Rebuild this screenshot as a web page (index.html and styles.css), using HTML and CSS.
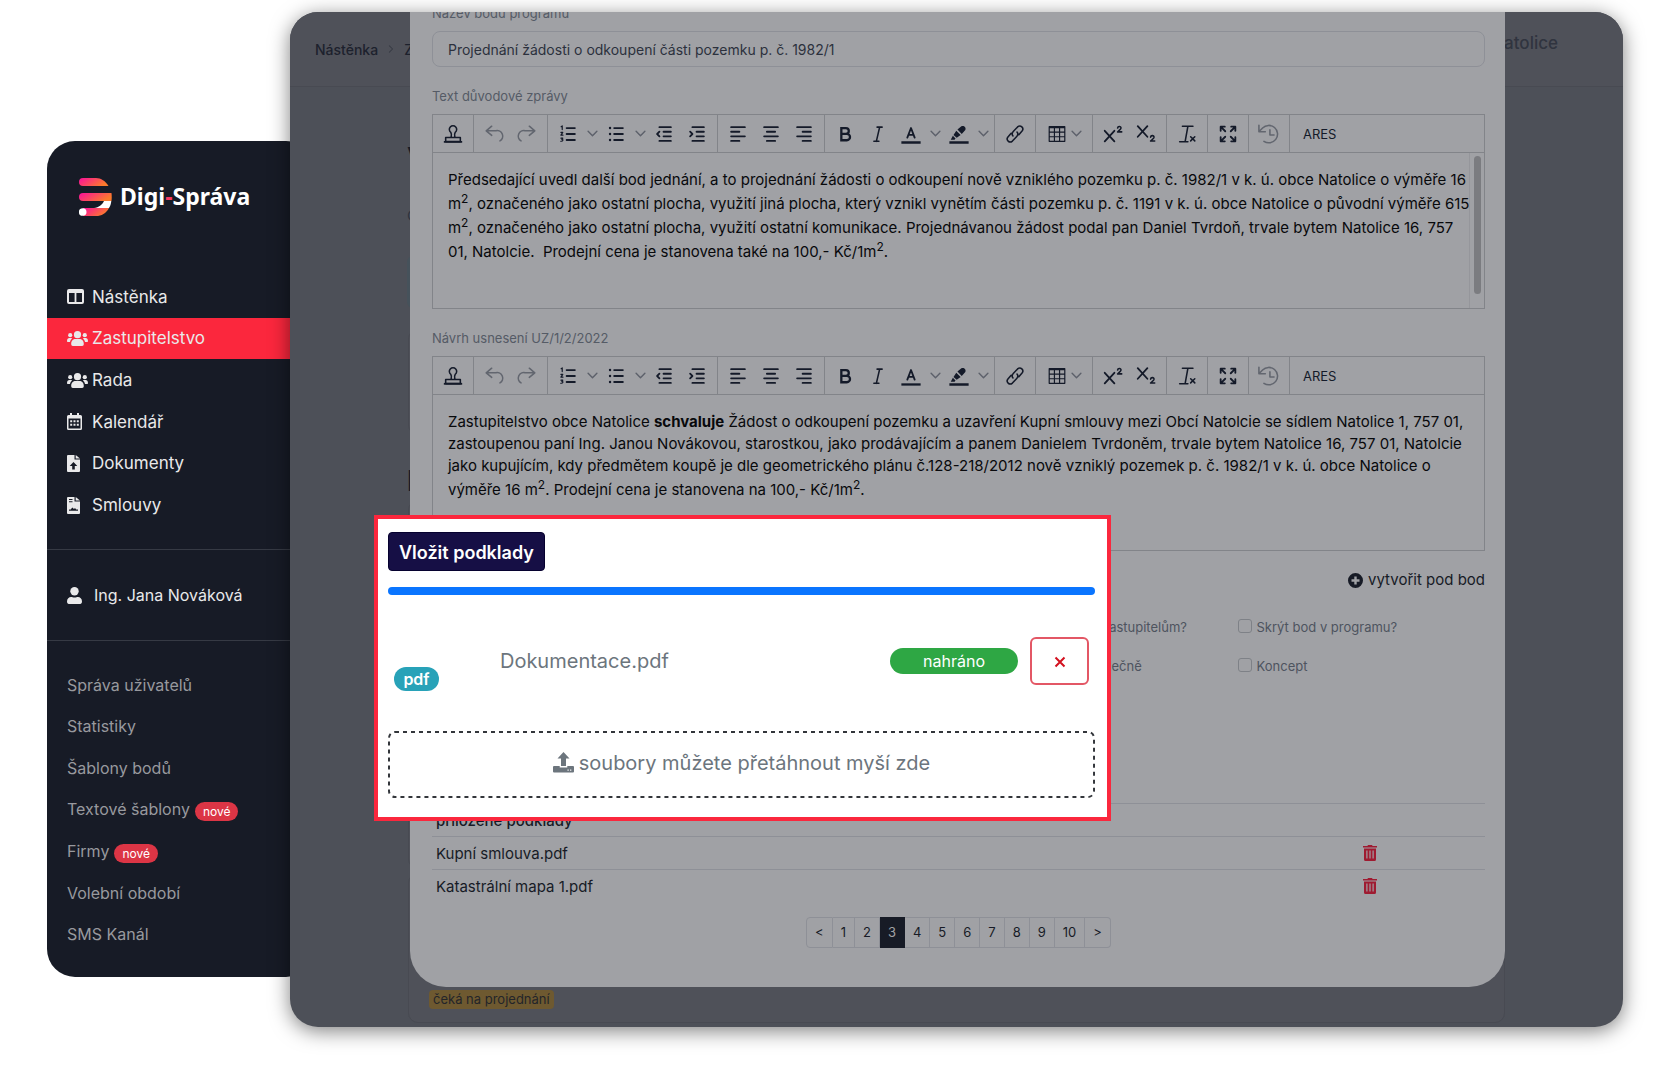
FILE: index.html
```
<!DOCTYPE html>
<html lang="cs">
<head>
    <meta charset="UTF-8">
    <meta name="viewport" content="width=device-width, initial-scale=1.0">
    <title>Digi-Správa</title>
    <link rel="stylesheet" href="styles.css">
</head>
<body>

    <!-- icons -->
    <svg class="sprite" width="0" height="0" aria-hidden="true">
        <defs>
            <linearGradient id="logo-grad" x1="0" y1="0" x2="1" y2="0.4">
                <stop offset="0" stop-color="#fb0f9c"/>
                <stop offset="1" stop-color="#fb7a2c"/>
            </linearGradient>
        </defs>
        <symbol id="i-columns" viewBox="0 0 17 15"><path fill-rule="evenodd" d="M2 0h13a2 2 0 0 1 2 2v11a2 2 0 0 1-2 2H2a2 2 0 0 1-2-2V2a2 2 0 0 1 2-2zm0 4v9h5.600V4zm7.400 0v9H15V4z"/></symbol>
        <symbol id="i-users" viewBox="0 0 21 15"><circle cx="10.500" cy="3.700" r="3.600"/><circle cx="3.200" cy="4.200" r="2.100"/><circle cx="17.800" cy="4.200" r="2.100"/><path d="M4.200 13c0-3.500 2-5 4.300-5h4c2.300 0 4.300 1.500 4.300 5 0 1.200-.6 2-1.600 2H5.800c-1 0-1.600-.8-1.600-2zM0 10c0-2 1-3 2.400-3h1.800l1 .6C3.900 8.500 3.300 9.600 3 11H1c-.6 0-1-.4-1-1zM21 10c0-2-1-3-2.400-3h-1.800l-1 .6c1.300.9 1.900 2 2.200 3.400h2c.6 0 1-.4 1-1z"/></symbol>
        <symbol id="i-calendar" viewBox="0 0 15 17"><path fill-rule="evenodd" d="M3 0h2v2h5V0h2v2h1.500A1.500 1.500 0 0 1 15 3.500v12a1.500 1.500 0 0 1-1.500 1.500h-12A1.500 1.500 0 0 1 0 15.500v-12A1.500 1.500 0 0 1 1.500 2H3zM1.500 5.500v10h12v-10z"/><path d="M3.200 7.200h2v2h-2zm3.300 0h2v2h-2zm3.300 0h2v2h-2zm-6.600 3.500h2v2h-2zm3.300 0h2v2h-2zm3.300 0h2v2h-2z"/></symbol>
        <symbol id="i-upload-file" viewBox="0 0 13 17"><path fill-rule="evenodd" d="M1 0h6.500v4.500H13V16a1 1 0 0 1-1 1H1a1 1 0 0 1-1-1V1a1 1 0 0 1 1-1zm5.500 7L2.700 11h2.500v3.500h2.600V11h2.500z"/><path d="M8.700 0L13 3.500H8.700z"/></symbol>
        <symbol id="i-contract" viewBox="0 0 13 17"><path fill-rule="evenodd" d="M1 0h6.500v4.500H13V16a1 1 0 0 1-1 1H1a1 1 0 0 1-1-1V1a1 1 0 0 1 1-1zm1 2v1h3.500V2zm0 2.300v1h3.500v-1zM2 13.700h9v-1.200H9.200L8 11l-1 1-1.700-1.600-1.600 2.100H2z"/><path d="M8.700 0L13 3.500H8.700z"/></symbol>
        <symbol id="i-user" viewBox="0 0 15 17"><circle cx="7.500" cy="4.200" r="4.200"/><path d="M0 14.500C0 11.500 2 10 4 10c1 0 2 .6 3.500.6S10 10 11 10c2 0 4 1.500 4 4.500 0 1.600-.7 2.500-1.800 2.500H1.800C.7 17 0 16.100 0 14.500z"/></symbol>

        <symbol id="i-stamp" viewBox="0 0 24 24"><path class="mid" d="M10 15.500c.6-2.500.4-4-.4-5.300a4 4 0 1 1 4.800 0c-.8 1.300-1 2.800-.4 5.300"/><path class="mid" d="M4 15.800h16v4.500H4z"/><path d="M2 19.500h20v2H2z"/></symbol>
        <symbol id="i-undo" viewBox="0 0 24 24"><path class="mid" d="M9.500 3.500L3.500 8.500l6 5M4 8.500h10a6 6 0 0 1 4.500 11"/></symbol>
        <symbol id="i-redo" viewBox="0 0 24 24"><path class="mid" d="M14.500 3.500l6 5-6 5M20 8.500H10a6 6 0 0 0-4.500 11"/></symbol>
        <symbol id="i-ol" viewBox="0 0 24 24"><path class="line" d="M10.500 5.500h9M10.500 12h9M10.500 18.500h9"/><path class="thin" d="M4.500 4l1.200-.8v4M4.300 10.300h2l-2 3h2.200M4.300 16.500h2l-1 1.400c1.800 0 1.500 2.300-1.200 2"/></symbol>
        <symbol id="i-ul" viewBox="0 0 24 24"><path class="line" d="M10 5.500h9.500M10 12h9.500M10 18.500h9.500"/><circle cx="5.500" cy="5.500" r="1.300"/><circle cx="5.500" cy="12" r="1.300"/><circle cx="5.500" cy="18.500" r="1.300"/></symbol>
        <symbol id="i-outdent" viewBox="0 0 24 24"><path class="line" d="M7 4.500h12.500M11.500 9.500h8M11.500 14.500h8M7 19.500h12.500M7 9.500L4.500 12 7 14.500"/></symbol>
        <symbol id="i-indent" viewBox="0 0 24 24"><path class="line" d="M7 4.500h12.500M11.500 9.500h8M11.500 14.500h8M7 19.500h12.500M4.500 9.500L7 12l-2.500 2.500"/></symbol>
        <symbol id="i-left" viewBox="0 0 24 24"><path class="line" d="M4.500 4.500h15M4.500 9.500h9M4.500 14.500h15M4.500 19.500h9"/></symbol>
        <symbol id="i-center" viewBox="0 0 24 24"><path class="line" d="M4.500 4.500h15M7.500 9.500h9M4.500 14.500h15M7.500 19.500h9"/></symbol>
        <symbol id="i-right" viewBox="0 0 24 24"><path class="line" d="M4.500 4.500h15M10.500 9.500h9M4.500 14.500h15M10.500 19.500h9"/></symbol>
        <symbol id="i-bold" viewBox="0 0 24 24"><path class="thick" d="M8 5.500h5a3 3 0 0 1 0 6.300H8zM8 11.800h6a3.500 3.500 0 0 1 0 7H8z"/></symbol>
        <symbol id="i-italic" viewBox="0 0 24 24"><path class="mid" d="M11 4.500h5.500M7.500 20H13M13.800 4.500L10.200 20"/></symbol>
        <symbol id="i-color" viewBox="0 0 24 24"><path d="M1.500 20h21v2.500h-21z"/><path class="line" d="M8 16l4-10.500L16 16M9.500 13h5"/></symbol>
        <symbol id="i-marker" viewBox="0 0 24 24"><path d="M1.500 20h21v2.500h-21zM3 18.300L5.300 14l2.900 2.800-1 1.500zM6 13l3-4.500 4.800 4.500-4.300 3.200zM10.300 7.200l4.300-3.600c2.800-1.200 5.500 1.300 4.300 4L15 12z"/></symbol>
        <symbol id="i-link" viewBox="0 0 24 24"><path class="mid" d="M9.800 14.200c-1.300-1.600-1.100-3.400.3-4.900l4.700-5c3.300-2.800 7.500 1.200 4.900 4.500l-3.500 4M14.200 9.800c1.300 1.600 1.100 3.400-.3 4.900l-4.700 5c-3.300 2.800-7.500-1.200-4.900-4.500l3.500-4"/></symbol>
        <symbol id="i-table" viewBox="0 0 24 24"><path class="thin" d="M3.500 4h17v16h-17zM3.500 5h17M3.500 10h17M3.500 15h17M9.200 4.500v15M14.800 4.500v15"/></symbol>
        <symbol id="i-sup" viewBox="0 0 24 24"><path class="line" d="M3 8.500L13.500 20M13.500 8.500L3 20"/><path class="mid" d="M17 5.500c.3-2.400 4-2.200 3.700.2-.2 1.300-2.200 2.300-3.700 4h4.500"/></symbol>
        <symbol id="i-sub" viewBox="0 0 24 24"><path class="line" d="M3 3.500L13.500 15M13.500 3.500L3 15"/><path class="mid" d="M17 15.500c.3-2.400 4-2.200 3.700.2-.2 1.300-2.200 2.300-3.700 4h4.500"/></symbol>
        <symbol id="i-clear" viewBox="0 0 24 24"><path class="mid" d="M7 3.500h11.500M13 3.500L10 20M4 20.500h9M16 15l4.500 4.500M20.500 15L16 19.500"/></symbol>
        <symbol id="i-full" viewBox="0 0 24 24"><path class="line" d="M4 8.500V4h4.500M4.500 4.500L9 9M15.500 4H20v4.500M19.500 4.500L15 9M4 15.500V20h4.500M4.500 19.500L9 15M15.500 20H20v-4.500M19.500 19.500L15 15"/></symbol>
        <symbol id="i-history" viewBox="0 0 24 24"><path class="mid" d="M1 2.500v7h7M1.500 9L5 5.500a9.500 9.500 0 1 1 1.500 14.500M13 7.500v5.500h4.500"/></symbol>
        <symbol id="i-down" viewBox="0 0 10 10"><path class="thin" d="M1 3l4 4 4-4"/></symbol>

        <symbol id="i-plus" viewBox="0 0 15 15"><path fill-rule="evenodd" d="M7.500 0a7.500 7.500 0 1 1 0 15 7.500 7.500 0 0 1 0-15zM6.300 3.500v2.800H3.500v2.400h2.800v2.800h2.400V8.700h2.800V6.300H8.700V3.500z"/></symbol>
        <symbol id="i-trash" viewBox="0 0 14 16"><path fill-rule="evenodd" d="M5 0h4l.6 1H14v1.500H0V1h4.400zM1 3.500h12V14.500a1.500 1.500 0 0 1-1.500 1.500h-9A1.500 1.500 0 0 1 1 14.500zM3.300 5.500v8h1.200v-8zm3.100 0v8h1.200v-8zm3.100 0v8h1.200v-8z"/></symbol>
        <symbol id="i-upload" viewBox="0 0 21 21"><path d="M10.500 0l6 6.500H13V14H8V6.500H4.500z"/><path fill-rule="evenodd" d="M1 14h5.700v1.500h7.600V14H20a1 1 0 0 1 1 1v4.500a1 1 0 0 1-1 1H1a1 1 0 0 1-1-1V15a1 1 0 0 1 1-1zm13.500 3.500v1.200h1.200v-1.200zm2.600 0v1.200h1.200v-1.200z"/></symbol>
    </svg>

    <div class="stage">
        <aside class="sidebar">
            <a href="#" class="logo">
                <svg width="33" height="39" viewBox="0 0 33 39">
                    <path fill="url(#logo-grad)" d="M4 0h13c5 0 9.500 3 12.500 8H4a4 4 0 0 1 0-8z"/>
                    <path fill="url(#logo-grad)" d="M4 15h28.500c.3 3 .3 5 0 8H4a4 4 0 0 1 0-8z"/>
                    <path fill="url(#logo-grad)" d="M4 30h26c-3 5.500-7.500 8-13 8H4z"/>
                    <path fill="#fff" d="M15 30c5-.5 8-3 10-7h7.300c-.3 3-1 5-2.300 7z"/>
                    <circle cx="3.700" cy="34" r="3.800" fill="#fff"/>
                </svg>
                <span class="logo-text">Digi<span class="dash">-</span>Správa</span>
            </a>
            <nav class="menu">
                <a href="#"><svg width="17" height="15"><use href="#i-columns"/></svg>Nástěnka</a>
                <a href="#" class="active"><svg width="21" height="15"><use href="#i-users"/></svg>Zastupitelstvo</a>
                <a href="#"><svg width="21" height="15"><use href="#i-users"/></svg>Rada</a>
                <a href="#"><svg width="15" height="17"><use href="#i-calendar"/></svg>Kalendář</a>
                <a href="#"><svg width="13" height="17"><use href="#i-upload-file"/></svg>Dokumenty</a>
                <a href="#"><svg width="13" height="17"><use href="#i-contract"/></svg>Smlouvy</a>
            </nav>
            <div class="user"><svg width="15" height="17"><use href="#i-user"/></svg>Ing. Jana Nováková</div>
            <nav class="menu-sub">
                <a href="#">Správa uživatelů</a>
                <a href="#">Statistiky</a>
                <a href="#">Šablony bodů</a>
                <a href="#">Textové šablony <span class="new">nové</span></a>
                <a href="#">Firmy <span class="new">nové</span></a>
                <a href="#">Volební období</a>
                <a href="#">SMS Kanál</a>
            </nav>
        </aside>

        <main class="window">
            <!-- page under the modal -->
            <div class="page">
                <header class="topbar">
                    <div class="crumbs"><a href="#">Nástěnka</a><svg width="8" height="10"><use href="#i-down"/></svg><a href="#">Zastupitelstvo</a></div>
                    <div class="town">Obec Natolice</div>
                </header>
                <div class="under">
                    <h1>Veřejné zasedání</h1>
                    <p>Obec Natolice</p>
                    <div class="note"></div>
                    <div class="card card-info"></div>
                    <h1>Program</h1>
                    <div class="card card-item"></div>
                    <div class="card card-last"><span class="state">čeká na projednání</span></div>
                    <div class="card card-next"></div>
                </div>
            </div>

            <section class="modal">
                <label class="label" for="nazev">Název bodu programu</label>
                <input class="title-input" id="nazev" type="text" value="Projednání žádosti o odkoupení části pozemku p. č. 1982/1">

                <div class="label">Text důvodové zprávy</div>
                <div class="editor">
                    <div class="toolbar">
                        <div class="group"><button title="Razítko"><svg><use href="#i-stamp"/></svg></button></div>
                        <div class="group off"><button title="Zpět"><svg><use href="#i-undo"/></svg></button><button title="Znovu"><svg><use href="#i-redo"/></svg></button></div>
                        <div class="group"><button title="Číslovaný seznam"><svg><use href="#i-ol"/></svg></button><button class="drop" title="Více"><svg><use href="#i-down"/></svg></button><button title="Odrážky"><svg><use href="#i-ul"/></svg></button><button class="drop" title="Více"><svg><use href="#i-down"/></svg></button><button title="Zmenšit odsazení"><svg><use href="#i-outdent"/></svg></button><button title="Zvětšit odsazení"><svg><use href="#i-indent"/></svg></button></div>
                        <div class="group"><button title="Vlevo"><svg><use href="#i-left"/></svg></button><button title="Na střed"><svg><use href="#i-center"/></svg></button><button title="Vpravo"><svg><use href="#i-right"/></svg></button></div>
                        <div class="group"><button title="Tučné"><svg><use href="#i-bold"/></svg></button><button title="Kurzíva"><svg><use href="#i-italic"/></svg></button><button title="Barva textu"><svg><use href="#i-color"/></svg></button><button class="drop" title="Více"><svg><use href="#i-down"/></svg></button><button title="Barva pozadí"><svg><use href="#i-marker"/></svg></button><button class="drop" title="Více"><svg><use href="#i-down"/></svg></button></div>
                        <div class="group"><button title="Odkaz"><svg><use href="#i-link"/></svg></button></div>
                        <div class="group"><button class="wide" title="Tabulka"><svg><use href="#i-table"/></svg><svg class="arrow"><use href="#i-down"/></svg></button></div>
                        <div class="group"><button title="Horní index"><svg><use href="#i-sup"/></svg></button><button title="Dolní index"><svg><use href="#i-sub"/></svg></button></div>
                        <div class="group"><button title="Vymazat formát"><svg><use href="#i-clear"/></svg></button></div>
                        <div class="group"><button title="Celá obrazovka"><svg><use href="#i-full"/></svg></button></div>
                        <div class="group off"><button title="Historie"><svg><use href="#i-history"/></svg></button></div>
                        <button class="ares">ARES</button>
                    </div>
                    <div class="editor-body">
                        <p>Předsedající uvedl další bod jednání, a to projednání žádosti o odkoupení nově vzniklého pozemku p. č. 1982/1 v k. ú. obce Natolice o výměře 16<br>
                        m<sup>2</sup>, označeného jako ostatní plocha, využití jiná plocha, který vznikl vynětím části pozemku p. č. 1191 v k. ú. obce Natolice o původní výměře 615<br>
                        m<sup>2</sup>, označeného jako ostatní plocha, využití ostatní komunikace. Projednávanou žádost podal pan Daniel Tvrdoň, trvale bytem Natolice 16, 757<br>
                        01, Natolcie.&nbsp; Prodejní cena je stanovena také na 100,- Kč/1m<sup>2</sup>.</p>
                        <div class="scroll"><div class="thumb"></div></div>
                    </div>
                </div>

                <div class="label">Návrh usnesení UZ/1/2/2022</div>
                <div class="editor">
                    <div class="toolbar"></div>
                    <div class="editor-body">
                        <p>Zastupitelstvo obce Natolice <b>schvaluje</b> Žádost o odkoupení pozemku a uzavření Kupní smlouvy mezi Obcí Natolcie se sídlem Natolice 1, 757 01,<br>
                        zastoupenou paní Ing. Janou Novákovou, starostkou, jako prodávajícím a panem Danielem Tvrdoněm, trvale bytem Natolice 16, 757 01, Natolcie<br>
                        jako kupujícím, kdy předmětem koupě je dle geometrického plánu č.128-218/2012 nově vzniklý pozemek p. č. 1982/1 v k. ú. obce Natolice o<br>
                        výměře 16 m<sup>2</sup>. Prodejní cena je stanovena na 100,- Kč/1m<sup>2</sup>.</p>
                    </div>
                </div>

                <div class="add-row"><a href="#"><svg width="15" height="15"><use href="#i-plus"/></svg>vytvořit pod bod</a></div>

                <div class="checks">
                    <label><input type="checkbox">Odeslat e-mail zastupitelům?</label>
                    <label><input type="checkbox">Skrýt bod v programu?</label>
                    <label><input type="checkbox">Projednávat společně</label>
                    <label><input type="checkbox">Koncept</label>
                </div>

                <table class="files">
                    <thead>
                        <tr><th>přiložené podklady</th><th></th></tr>
                    </thead>
                    <tbody>
                        <tr><td>Kupní smlouva.pdf</td><td><button title="Smazat"><svg width="14" height="16"><use href="#i-trash"/></svg></button></td></tr>
                        <tr><td>Katastrální mapa 1.pdf</td><td><button title="Smazat"><svg width="14" height="16"><use href="#i-trash"/></svg></button></td></tr>
                    </tbody>
                </table>

                <nav class="pages">
                    <a href="#">&lt;</a><a href="#">1</a><a href="#">2</a><a href="#" class="current">3</a><a href="#">4</a><a href="#">5</a><a href="#">6</a><a href="#">7</a><a href="#">8</a><a href="#">9</a><a href="#">10</a><a href="#">&gt;</a>
                </nav>

                <!-- upload panel -->
                <div class="upload">
                    <button class="insert">Vložit podklady</button>
                    <div class="progress"></div>
                    <div class="file">
                        <span class="ext">pdf</span>
                        <span class="name">Dokumentace.pdf</span>
                        <span class="done">nahráno</span>
                        <button class="remove" title="Odebrat"><svg width="12" height="12" viewBox="0 0 12 12"><path d="M1.500 1.500l9 9M10.500 1.500l-9 9"/></svg></button>
                    </div>
                    <div class="dropzone">
                        <svg class="frame" width="100%" height="100%"><rect x="1" y="1" rx="6"/></svg>
                        <svg width="21" height="21"><use href="#i-upload"/></svg>
                        <span>soubory můžete přetáhnout myší zde</span>
                    </div>
                </div>
            </section>
        </main>
    </div>

    <script>
        // both editors have the same toolbar
        var toolbars = document.querySelectorAll(".toolbar");
        toolbars[1].innerHTML = toolbars[0].innerHTML;
    </script>

</body>
</html>
```
FILE: styles.css
```
* {
    box-sizing: border-box;
}
body {
    margin: 0;
    background-color: #fff;
    font-family: Inter, "Liberation Sans", sans-serif;
    font-size: 15px;
    color: #171b26;
}
a {
    color: inherit;
    text-decoration: none;
}
button {
    font-family: inherit;
    padding: 0;
    border: 0;
    background: none;
    color: inherit;
    cursor: pointer;
}
svg {
    fill: currentColor;
    flex: none;
}
.sprite {
    position: absolute;
}
.line, .mid, .thin, .thick {
    fill: none;
    stroke: currentColor;
    stroke-width: 2;
    stroke-linecap: round;
    stroke-linejoin: round;
}
.mid {
    stroke-width: 1.700;
}
.thin {
    stroke-width: 1.300;
}
.thick {
    stroke-width: 2.500;
    stroke-linecap: butt;
    stroke-linejoin: miter;
}
.stage {
    display: flex;
    align-items: flex-start;
    padding: 12px 57px 53px 47px;
}

/* sidebar */
.sidebar {
    width: 267px;
    margin: 129px -24px 0 0;
    padding-bottom: 22px;
    background-color: #171b26;
    border-radius: 28px;
    color: #e9e9ea;
    font-size: 16px;
    flex: none;
}
.logo {
    display: flex;
    align-items: center;
    gap: 8px;
    padding: 37px 32px 59px;
    color: #fff;
}
.logo-text {
    padding-bottom: 4px;
    font-family: "Noto Sans", sans-serif;
    font-size: 23px;
    line-height: 34px;
    font-weight: 700;
}
.dash {
    color: #fb3a62;
}
.menu, .menu-sub {
    display: grid;
    grid-auto-rows: 1fr;
}
.menu {
    height: 250px;
    font-size: 17px;
}
.menu a {
    display: grid;
    grid-template-columns: 21px 1fr;
    align-items: center;
    gap: 4px;
    padding-left: 20px;
}
.menu .active {
    background-color: #fb273d;
}
.user {
    display: flex;
    align-items: center;
    gap: 12px;
    height: 92px;
    margin: 23px 0;
    padding-left: 20px;
    border-top: 1px solid #363a44;
    border-bottom: 1px solid #363a44;
}
.menu-sub {
    height: 291px;
    color: #98999e;
}
.menu-sub a {
    display: flex;
    align-items: center;
    gap: 5px;
    padding-left: 20px;
}
.new {
    margin-top: 4px;
    padding: 0 8px;
    border-radius: 10px;
    background-color: #dc3545;
    color: #fff;
    font-size: 12px;
    line-height: 19px;
}

/* window with the page and the modal over it */
.window {
    position: relative;
    flex: 1;
    min-width: 0;
    padding-bottom: 40px;
    overflow: hidden;
    border-radius: 28px;
    background-color: #4d5058;
    box-shadow: 0 4px 20px rgba(0, 0, 0, 0.5);
}
.page {
    position: absolute;
    top: 0;
    left: 0;
    right: 0;
}
.topbar {
    display: flex;
    justify-content: space-between;
    align-items: center;
    height: 75px;
    padding: 0 65px 0 25px;
    border-bottom: 1px solid #484a52;
    background-color: #4f5159;
}
.crumbs {
    display: flex;
    align-items: center;
    gap: 9px;
    font-size: 14px;
    font-weight: 500;
    color: #1d212d;
}
.crumbs svg {
    transform: rotate(-90deg);
    color: #383b45;
}
.town {
    padding-bottom: 12px;
    font-size: 17px;
    font-weight: 500;
    color: #30343f;
}
.under {
    padding: 54px 118px 0 117px;
}
.under h1 {
    margin: 0;
    font-size: 28px;
    line-height: 34px;
}
.under p {
    margin: 31px 0 30px;
    font-size: 15px;
    line-height: 20px;
    color: #30343f;
}
.note {
    height: 52px;
    border-radius: 6px;
    background-color: #46525b;
}
.card {
    margin: 0 0 4px 1px;
    border: 1px solid #484a52;
    border-radius: 10px;
    background-color: #4f5159;
}
.card-info {
    height: 106px;
    margin: 21px 0 29px 1px;
}
.card-item {
    height: 369px;
    margin-top: 2px;
}
.card-last {
    display: flex;
    align-items: flex-end;
    height: 150px;
    padding: 0 20px 13px;
}
.card-next {
    height: 20px;
}
.state {
    padding: 0 4px;
    border-radius: 4px;
    background-color: #6e5930;
    color: #242529;
    font-size: 13px;
    line-height: 19px;
}
.modal {
    position: relative;
    margin: 0 118px 0 9%;
    padding: 0 20px 39px 22px;
    border-radius: 0 0 36px 36px;
    background-color: #a0a1a5;
}
.label {
    display: block;
    margin: 19px 0 8px;
    font-size: 13px;
    line-height: 20px;
    color: #555b66;
}
/* scrolled partly out of the window */
label.label {
    margin: 0;
    padding-bottom: 16px;
    line-height: 3px;
}
.title-input {
    display: block;
    width: 100%;
    height: 36px;
    padding: 0 15px;
    border: 1px solid #8e9097;
    border-radius: 8px;
    background: none;
    font-family: inherit;
    font-size: 14px;
    color: #2c313d;
}

/* editor */
.editor {
    border: 1px solid #828489;
}
.toolbar {
    display: flex;
    height: 38px;
    border-bottom: 1px solid #828489;
    color: #141a29;
}
.group {
    display: flex;
    padding: 0 3px 0 4px;
    border-right: 1px solid #828489;
}
.toolbar button {
    display: flex;
    align-items: center;
    justify-content: center;
    width: 33px;
}
.toolbar svg {
    width: 22px;
    height: 22px;
}
.toolbar .off {
    color: #62666f;
}
.toolbar .drop {
    width: 15px;
}
.toolbar .drop svg, .toolbar .arrow {
    width: 11px;
    height: 11px;
    color: #5d616b;
}
.toolbar .wide {
    width: 49px;
    gap: 3px;
}
.toolbar .ares {
    width: auto;
    padding: 0 13px;
    font-size: 13px;
}
.editor-body {
    display: flex;
    justify-content: space-between;
    height: 155px;
    padding-left: 15px;
    color: #08090c;
}
.editor-body p {
    margin: 16px 0;
    font-size: 15px;
    line-height: 22px;
    white-space: nowrap;
}
.editor-body sup {
    font-size: 12px;
    line-height: 16px;
}
.scroll {
    width: 15px;
    padding: 3px 4px;
    border-left: 1px solid #95969b;
}
.thumb {
    width: 7px;
    height: 138px;
    border-radius: 4px;
    background-color: #7b7c80;
}
.add-row {
    display: flex;
    justify-content: flex-end;
    margin-top: 17px;
    line-height: 24px;
}
.add-row a {
    display: flex;
    align-items: center;
    gap: 5px;
}
.checks {
    display: grid;
    grid-template-columns: 1fr 1fr;
    gap: 19px 0;
    margin: 25px 0 0 53%;
    color: #4e545f;
    font-size: 13px;
    line-height: 20px;
}
.checks label {
    display: flex;
    align-items: center;
    gap: 5px;
}
.checks input {
    appearance: none;
    width: 14px;
    height: 14px;
    margin: 0 0 2px;
    border: 1px solid #7e8187;
    border-radius: 3px;
}
.files {
    width: 100%;
    margin-top: 127px;
    border-collapse: collapse;
    font-size: 15px;
}
.files th, .files td {
    width: 88%;
    height: 33px;
    padding: 0 4px;
    border-top: 1px solid #8e9097;
    text-align: left;
    font-weight: 400;
}
.files th {
    font-weight: 500;
}
.files td + td, .files th + th {
    width: 12%;
}
.files button, .files svg {
    display: block;
    color: #9f1b31;
}
.pages {
    display: flex;
    justify-content: center;
    margin-top: 14px;
    font-size: 13px;
    line-height: 29px;
}
.pages a {
    padding: 0 8px;
    border: 1px solid #8e9097;
    border-left-width: 0;
}
.pages a:first-child {
    border-left-width: 1px;
    border-radius: 4px 0 0 4px;
}
.pages a:last-child {
    border-radius: 0 4px 4px 0;
}
.pages .current {
    background-color: #171b26;
    border-color: #171b26;
    color: #a0a1a5;
}

/* upload panel */
.upload {
    position: absolute;
    top: 503px;
    left: -36px;
    right: 394px;
    padding: 13px 12px 19px 10px;
    border: 4px solid #fb273d;
    background-color: #fff;
}
.insert {
    display: block;
    height: 39px;
    padding: 1px 10px 0;
    border: 1px solid #06012f;
    border-radius: 4px;
    background-color: #160f45;
    color: #fff;
    font-size: 18px;
    font-weight: 600;
}
.progress {
    height: 8px;
    margin-top: 16px;
    border-radius: 4px;
    background-color: #0a75ff;
}
.file {
    display: flex;
    align-items: center;
    height: 136px;
    padding: 0 6px 4px;
}
.ext {
    width: 45px;
    margin-top: 36px;
    border-radius: 12px;
    background-color: #28a2b8;
    color: #fff;
    font-size: 16px;
    font-weight: 600;
    line-height: 24px;
    text-align: center;
}
.name {
    margin-left: 61px;
    margin-right: auto;
    font-size: 20px;
    color: #6c757d;
}
.done {
    width: 128px;
    margin-right: 12px;
    border-radius: 13px;
    background-color: #2ea744;
    color: #fff;
    font-size: 16px;
    line-height: 26px;
    text-align: center;
}
.remove {
    width: 59px;
    height: 48px;
    padding-top: 4px;
    border: 2px solid #e35765;
    border-radius: 6px;
}
.remove path {
    stroke: #d3111f;
    stroke-width: 2;
}
.dropzone {
    position: relative;
    display: flex;
    align-items: center;
    justify-content: center;
    gap: 5px;
    height: 67px;
    padding-bottom: 4px;
    color: #6c757d;
    font-size: 20px;
}
.frame {
    position: absolute;
    top: 0;
    left: 0;
}
.frame rect {
    width: calc(100% - 2px);
    height: calc(100% - 2px);
    fill: none;
    stroke: #33363b;
    stroke-width: 2;
    stroke-dasharray: 4 4;
}
```
